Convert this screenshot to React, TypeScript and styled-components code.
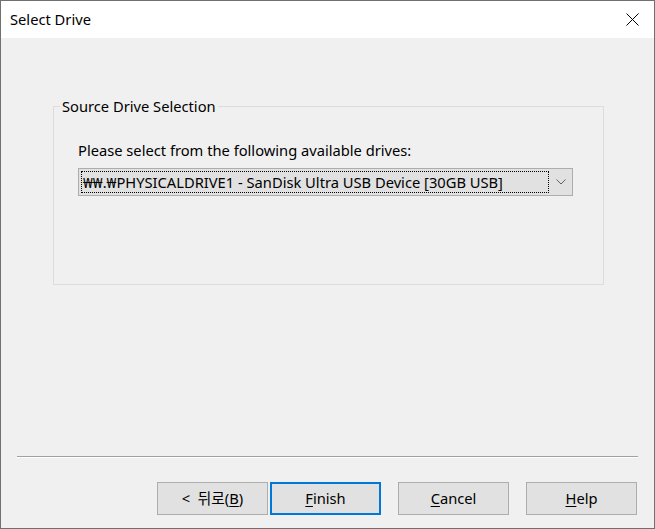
import React from "react";
import styled, { createGlobalStyle } from "styled-components";

const GlobalStyle = createGlobalStyle`
  html, body {
    margin: 0;
    padding: 0;
    background: #ffffff;
  }
  body {
    font-family: "Noto Sans", "Noto Sans CJK KR", sans-serif;
    font-size: 14.7px;
    color: #000000;
  }
`;

const Window = styled.div`
  width: 655px;
  height: 529px;
  box-sizing: border-box;
  border: 1px solid #707070;
  background: #f0f0f0;
  display: flex;
  flex-direction: column;
  overflow: hidden;
`;

const TitleBar = styled.div`
  height: 37px;
  flex: none;
  background: #ffffff;
  display: flex;
  align-items: center;
  justify-content: space-between;
  padding: 0 15px 0 9px;
`;

const Title = styled.span`
  font-size: 14.7px;
  line-height: 1;
`;

const CloseButton = styled.span`
  display: flex;
  align-items: center;
  justify-content: center;
  width: 14px;
  height: 14px;
`;

const Body = styled.div`
  flex: 1;
  display: flex;
  flex-direction: column;
`;

const GroupBox = styled.fieldset`
  margin: 58px 0 0 52px;
  width: 551px;
  height: 189px;
  box-sizing: border-box;
  border: 1px solid #dcdcdc;
  padding: 0;
`;

const Legend = styled.legend`
  margin-left: 6px;
  padding: 0 2px;
  font-size: 14.7px;
`;

const GroupContent = styled.div`
  display: flex;
  flex-direction: column;
  padding: 0 30px 0 24px;
`;

const Prompt = styled.div`
  margin-top: 24px;
  font-size: 14.7px;
  line-height: 20px;
`;

const Combo = styled.div`
  margin-top: 8px;
  height: 28px;
  box-sizing: border-box;
  border: 1px solid #adadad;
  background: #e1e1e1;
  display: flex;
  align-items: stretch;
`;

const ComboValue = styled.div`
  flex: 1;
  margin: 2px 0 2px 2px;
  border: 1px dotted #000000;
  display: flex;
  align-items: center;
  padding-left: 1px;
  font-size: 14.7px;
  white-space: nowrap;
  overflow: hidden;
`;

const ComboArrow = styled.div`
  width: 23px;
  display: flex;
  align-items: center;
  justify-content: center;
`;

const Spacer = styled.div`
  flex: 1;
`;

const Separator = styled.div`
  margin: 0 16px;
  height: 1px;
  background: #a0a0a0;
  border-bottom: 1px solid #ffffff;
`;

const ButtonRow = styled.div`
  display: flex;
  justify-content: flex-end;
  padding: 24px 17px 13px 0;
`;

const Button = styled.button<{ $primary?: boolean; $gap?: number }>`
  width: 111px;
  height: 33px;
  margin-left: ${(p) => p.$gap ?? 17}px;
  box-sizing: border-box;
  background: #e1e1e1;
  border: ${(p) => (p.$primary ? "2px solid #0078d7" : "1px solid #adadad")};
  font-family: "Noto Sans", "Noto Sans CJK KR", sans-serif;
  font-size: 14.7px;
  color: #000000;
  padding: 0 0 2px 0;
  display: flex;
  align-items: center;
  justify-content: center;
  white-space: pre;
`;

const Key = styled.span`
  text-decoration: underline;
  text-underline-offset: 2px;
`;

export default function App() {
  return (
    <>
      <GlobalStyle />
      <Window>
        <TitleBar>
          <Title>Select Drive</Title>
          <CloseButton>
            <svg width="13" height="13" viewBox="0 0 13 13">
              <path d="M0.5 0.5 L12.5 12.5 M12.5 0.5 L0.5 12.5" stroke="#000" strokeWidth="1" fill="none" />
            </svg>
          </CloseButton>
        </TitleBar>
        <Body>
          <GroupBox>
            <Legend>Source Drive Selection</Legend>
            <GroupContent>
              <Prompt>Please select from the following available drives:</Prompt>
              <Combo>
                <ComboValue>₩₩.₩PHYSICALDRIVE1 - SanDisk Ultra USB Device [30GB USB]</ComboValue>
                <ComboArrow>
                  <svg width="10" height="6" viewBox="0 0 10 6">
                    <path d="M0.5 0.5 L5 5 L9.5 0.5" stroke="#606060" strokeWidth="1" fill="none" />
                  </svg>
                </ComboArrow>
              </Combo>
            </GroupContent>
          </GroupBox>
          <Spacer />
          <Separator />
          <ButtonRow>
            <Button>
              {"<  뒤로("}<Key>B</Key>)
            </Button>
            <Button $primary $gap={2}>
              <Key>F</Key>inish
            </Button>
            <Button>
              <Key>C</Key>ancel
            </Button>
            <Button>
              <Key>H</Key>elp
            </Button>
          </ButtonRow>
        </Body>
      </Window>
    </>
  );
}
